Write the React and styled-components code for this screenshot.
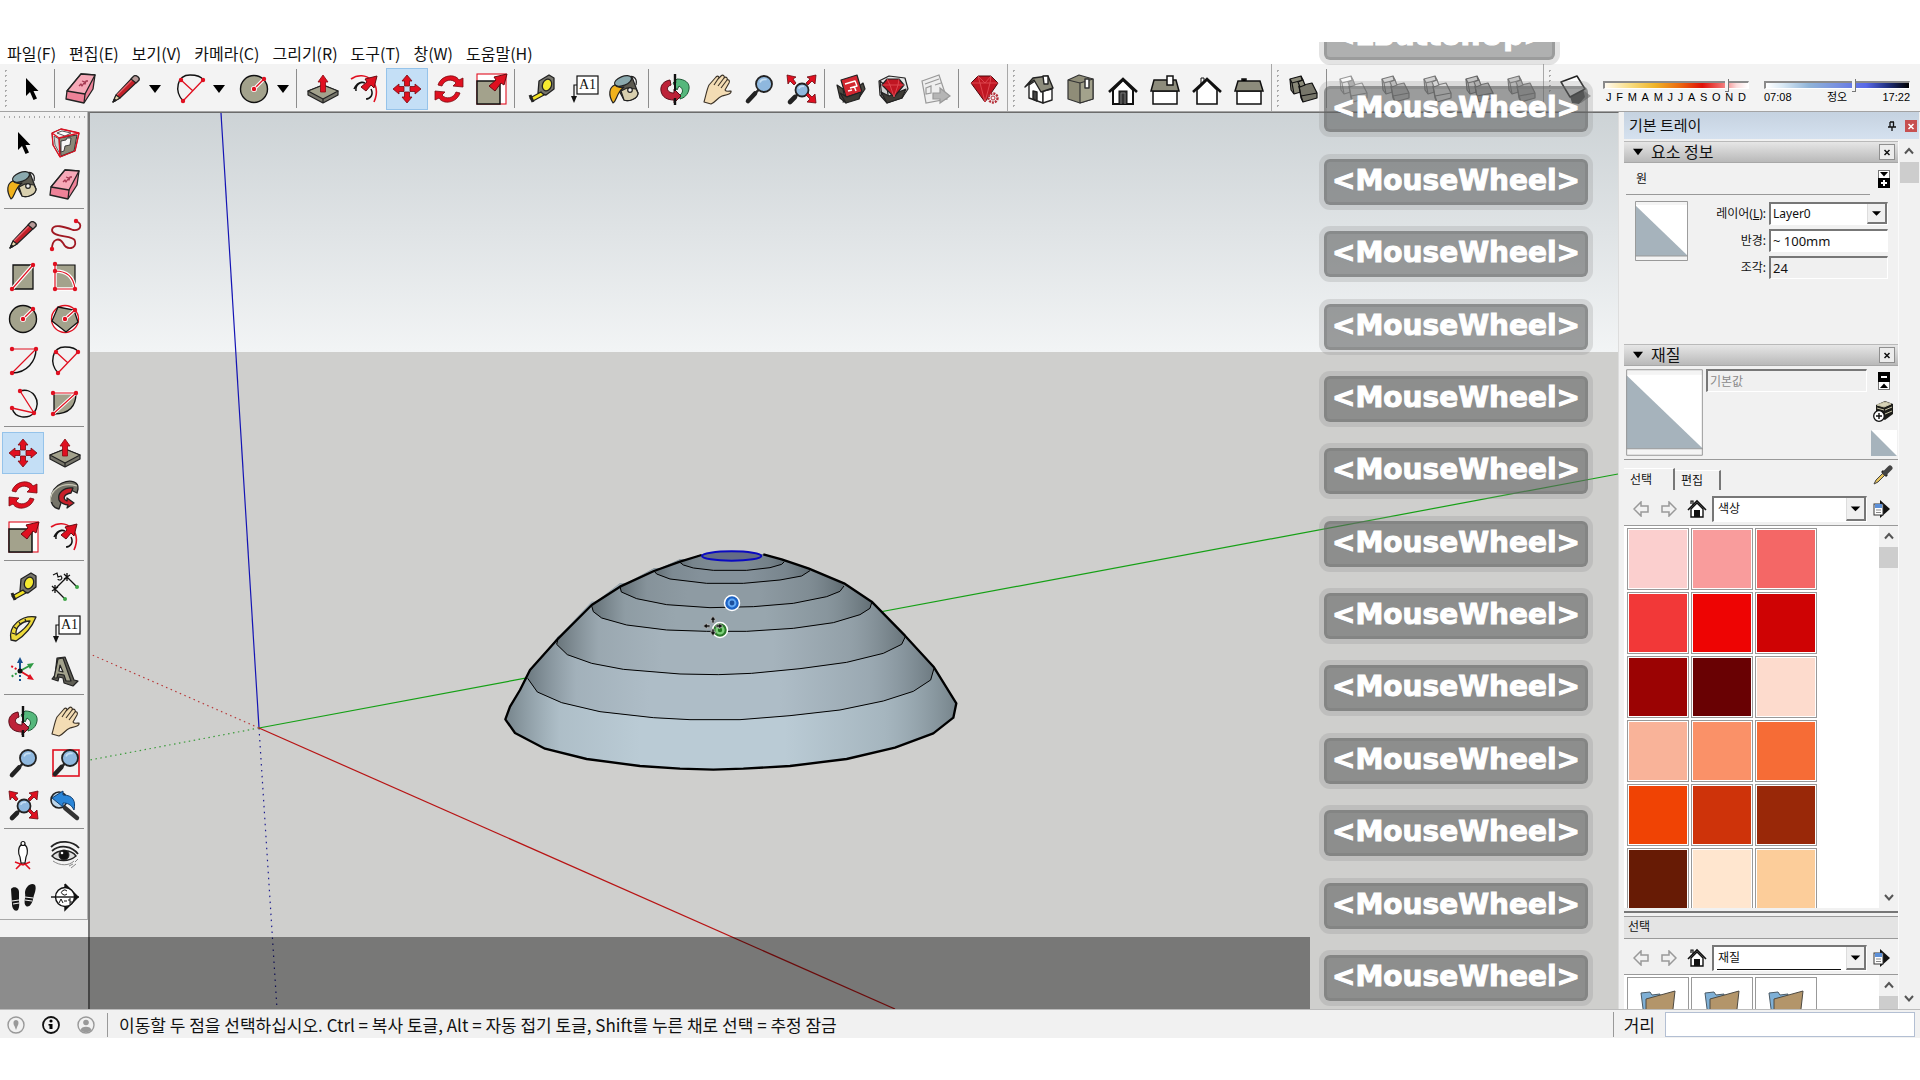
import React from "react";
import styled, { createGlobalStyle, css } from "styled-components";

const GlobalStyle = createGlobalStyle`
  * { box-sizing: border-box; }
  body { margin: 0; background: #fff; }
  button, input, select { font: inherit; color: inherit; margin: 0; padding: 0; border-radius: 0; }
`;

const ui = '"Noto Sans CJK KR", sans-serif';
const small = '"Noto Sans", "Noto Sans CJK KR", sans-serif';

/* ---------- shell ---------- */

const Page = styled.div`
  height: 100vh;
  min-height: 600px;
  padding: 42px 0;
  background: #fff;
  color: #111;
  font: 16px/20px ${ui};
  overflow: hidden;
`;
const Window = styled.div`
  position: relative;
  height: 100%;
  display: flex;
  flex-direction: column;
`;
const MenuBar = styled.nav`
  display: flex;
  gap: 13px;
  height: 22px;
  padding-left: 7px;
  flex: none;
`;
const MenuItem = styled.button`
  border: 0;
  background: none;
  line-height: 22px;
  white-space: nowrap;
`;
const ToolBar = styled.div`
  display: flex;
  flex: none;
  height: 48px;
  background: #f3f3f3;
  border-bottom: 1px solid #a3a3a3;
`;
const ToolGroup = styled.div`
  display: flex;
  align-items: center;
  padding: 3px 1px 0 0;
  border-left: ${(p) => (p.$first ? "0" : "1px solid #a8a8a8")};
`;
const Grip = styled.span`
  width: 10px;
  align-self: stretch;
  margin: 1px 0 3px;
  background: radial-gradient(circle at 50% 50%, #aaa 1px, transparent 1px) 50% 0 / 5px 5px repeat-y;
`;
const Divider = styled.span`
  width: 8px;
  align-self: stretch;
  padding: 2px 0 3px 2px;
  &::before { content: ""; display: block; width: 1px; height: 100%; background: #8d8d8d; }
`;
const ToolButton = styled.button`
  display: flex;
  align-items: center;
  justify-content: ${(p) => (p.$split ? "flex-start" : "center")};
  gap: 5px;
  width: ${(p) => (p.$split ? 64 : 42)}px;
  height: 42px;
  padding-left: ${(p) => (p.$split ? 5 : 0)}px;
  flex: none;
  border: 1px solid transparent;
  background: none;
  ${(p) => p.$on && css`background: #c4dff6; border-color: #95c3ea;`}
`;
const Glyph = styled.svg`
  display: block;
  flex: none;
  width: ${(p) => p.$w || 36}px;
  height: ${(p) => p.$h || p.$w || 36}px;
`;

const SunPanel = styled.div`
  display: flex;
  gap: 15px;
  padding: 17px 10px 0 6px;
  flex: 1;
`;
const SunSlider = styled.label`
  flex: 1;
  min-width: 0;
  display: flex;
  flex-direction: column;
  font: 11px/12px "Liberation Sans", "Noto Sans CJK KR", sans-serif;
`;
const Track = styled.input`
  appearance: none;
  width: 100%;
  height: 8px;
  border: 1px solid #fff;
  border-top: 2px solid #8a8a8a;
  border-left: 2px solid #8a8a8a;
  background: ${(p) => p.$fill};
  &::-webkit-slider-thumb {
    appearance: none;
    width: 4px;
    height: 13px;
    background: #f4f4f4;
    border-right: 1px solid #777;
    border-bottom: 1px solid #777;
  }
`;
const Ticks = styled.span`
  display: flex;
  justify-content: space-between;
  padding: 2px ${(p) => (p.$inset ? 3 : 0)}px 0;
  color: #000;
`;

const Main = styled.main`
  position: relative;
  display: flex;
  flex: 1;
  min-height: 0;
`;
const ToolBox = styled.aside`
  flex: none;
  width: 90px;
  background: #f2f2f2;
  border-right: 2px solid #777;
`;
const ToolBoxInner = styled.div`
  padding-bottom: 1px;
  border-right: 1px solid #b5b5b5;
  border-bottom: 1px solid #a8a8a8;
`;
const TopGrip = styled.div`
  height: 10px;
  margin: 0 2px;
  background: radial-gradient(circle at 50% 50%, #aaa 1px, transparent 1px) 0 50% / 5px 6px repeat-x;
`;
const ToolGrid = styled.div`
  display: grid;
  grid-template-columns: 42px 42px;
  padding: 0 2px;
  & + &::before {
    content: "";
    grid-column: 1 / -1;
    height: 1px;
    margin: 2px 2px 5px;
    background: #8d8d8d;
  }
`;
const Viewport = styled.section`
  flex: 1;
  min-width: 0;
  border-top: 1px solid #6c6c6c;
  border-right: 1px solid #ddd;
  background: #cfcfcd;
`;
const Scene = styled.svg`
  display: block;
  width: 100%;
  height: 100%;
`;
const CaptionBand = styled.div`
  position: absolute;
  left: 0;
  right: 610px;
  bottom: 0;
  height: 72px;
  background: rgba(0, 0, 0, 0.42);
`;

/* ---------- key stroke overlay ---------- */

const KeyStack = styled.div`
  position: absolute;
  top: 0;
  right: 327px;
  bottom: 30px;
  padding-bottom: 7px;
  overflow: hidden;
  display: flex;
  flex-direction: column;
  justify-content: space-between;
  align-items: flex-start;
  pointer-events: none;
`;
const KeyCap = styled.div`
  margin: 0 5px;
  height: 46px;
  padding: 0 5px;
  border: 3px solid rgba(110, 110, 110, 0.3);
  border-radius: 6px;
  background: ${(p) => (p.$faded ? "rgba(96, 98, 98, 0.5)" : "rgba(96, 98, 98, 0.6)")};
  box-shadow: 0 0 0 5px rgba(140, 140, 140, 0.24);
  color: #fff;
  font: bold 28px/38px "DejaVu Sans", sans-serif;
  -webkit-text-stroke: 1px #fff;
  white-space: nowrap;
  &:first-child { margin-top: -28px; }
`;

/* ---------- tray ---------- */

const Tray = styled.aside`
  flex: none;
  width: 301px;
  padding: 0 1px 0 5px;
  display: flex;
  flex-direction: column;
  background: #f1f1f1;
  font: 12px/18px ${small};
`;
const TrayTitle = styled.header`
  display: flex;
  align-items: center;
  height: 27px;
  padding: 0 2px 0 5px;
  margin-bottom: 2px;
  background: linear-gradient(#c5d2e0, #d5e1ef);
  font: 15px/24px ${ui};
  h2 { flex: 1; margin: 0; padding-bottom: 2px; font: inherit; }
`;
const PlainButton = styled.button`
  display: flex;
  align-items: center;
  justify-content: center;
  width: ${(p) => p.$w || 26}px;
  height: ${(p) => p.$h || 26}px;
  border: 0;
  background: none;
`;
const TrayClose = styled(PlainButton)`
  background: #c75050;
  margin-left: 6px;
`;
const TrayBody = styled.div`
  flex: 1;
  min-height: 0;
  display: flex;
`;
const Panels = styled.div`
  flex: 1;
  min-width: 0;
  display: flex;
  flex-direction: column;
  border-right: 1px solid #fafafa;
`;
const PanelHead = styled.header`
  display: flex;
  align-items: center;
  flex: none;
  height: 22px;
  padding: 0 3px 0 9px;
  gap: 8px;
  border-top: 1px solid #b9b9b9;
  border-bottom: 1px solid #a8a8a8;
  background: linear-gradient(#e6e6e6, #b9b9b9);
  font: 16px/18px ${ui};
  h3 { flex: 1; margin: 0; padding-bottom: 2px; font: inherit; }
`;
const PanelClose = styled(PlainButton)`
  border: 1px solid #8f8f8f;
  background: #ececec;
`;
const EntityBody = styled.div`
  flex: none;
  height: 181px;
  padding: 0 2px;
`;
const EntityName = styled.div`
  display: flex;
  align-items: center;
  height: 31px;
  padding: 0 6px 0 10px;
  justify-content: space-between;
`;
const Rule = styled.hr`
  flex: none;
  margin: 0 ${(p) => p.$right || 0}px 0 0;
  border: 0;
  height: 1px;
  background: #999;
`;
const EntityRow = styled.div`
  display: flex;
  justify-content: space-between;
  padding: 6px 8px 0 9px;
`;
const FieldGrid = styled.div`
  display: grid;
  grid-template-columns: auto 119px;
  column-gap: 3px;
  row-gap: 4px;
  padding-top: 1px;
  text-align: right;
  label { line-height: 23px; white-space: nowrap; }
`;
const sunken = css`
  border: 1px solid #fff;
  border-top: 2px solid #777;
  border-left: 2px solid #777;
`;
const TextBox = styled.input`
  ${sunken}
  width: ${(p) => (p.$w ? p.$w + "px" : "100%")};
  height: 23px;
  padding: 0 2px;
  font-size: 13px;
  background: ${(p) => (p.readOnly ? "#f0f0f0" : "#fff")};
  ${(p) => p.$muted && css`color: #8a8a8a; font-size: 12px;`}
`;
const SelectBox = styled.span`
  ${sunken}
  display: flex;
  flex: ${(p) => (p.$grow ? 1 : "none")};
  height: ${(p) => p.$h || 23}px;
  background: #fff;
  select {
    flex: 1;
    min-width: 0;
    appearance: none;
    border: 0;
    background: none;
    padding-left: ${(p) => (p.$grow ? 4 : 2)}px;
    ${(p) => p.$line && css`border-bottom: 1px solid #111; margin: 0 5px 0 3px; padding-left: 1px;`}
  }
  svg {
    height: 100%;
    width: 20px;
    background: #f0f0f0;
    border-right: 2px solid #777;
    border-bottom: 2px solid #777;
    border-left: 1px solid #ddd;
  }
`;
const MaterialHead = styled.div`
  display: flex;
  flex: none;
  height: 93px;
  padding: 3px 0 0 2px;
  gap: 3px;
`;
const SideIcons = styled.div`
  flex: 1;
  display: flex;
  flex-direction: column;
  align-items: center;
  gap: 4px;
  padding-top: 1px;
`;
const TabRow = styled.div`
  display: flex;
  align-items: flex-end;
  flex: none;
  height: 30px;
`;
const Tab = styled.button`
  width: ${(p) => (p.$on ? 51 : 46)}px;
  height: ${(p) => (p.$on ? 22 : 20)}px;
  padding: 0 6px;
  text-align: left;
  border: 0;
  border-top: 1px solid #fff;
  border-right: 2px solid #777;
  background: #f1f1f1;
  line-height: 16px;
`;
const TabSpacer = styled.span`
  flex: 1;
`;
const NavRow = styled.div`
  display: flex;
  align-items: center;
  flex: none;
  height: 35px;
  padding: 2px 2px 0 3px;
`;
const ListRow = styled.div`
  display: flex;
  flex: ${(p) => (p.$h ? "none" : "1")};
  height: ${(p) => (p.$h ? p.$h + "px" : "auto")};
  min-height: 0;
  overflow: hidden;
  background: #fff;
`;
const SwatchGrid = styled.div`
  flex: 1;
  display: grid;
  grid-template-columns: repeat(3, 62px);
  grid-auto-rows: 62px;
  gap: 2px;
  padding: 2px 3px 0;
`;
const Swatch = styled.button`
  border: 1px solid #999;
  padding: 1px;
  background: ${(p) => p.$color || "#fff"};
  background-clip: content-box;
  display: flex;
  align-items: center;
  justify-content: center;
`;
const Splitter = styled.div`
  flex: none;
  height: 8px;
  padding-top: 3px;
  &::before { content: ""; display: block; height: 2px; background: #777; }
`;
const PickBar = styled.div`
  flex: none;
  height: 23px;
  padding: 0 4px;
  line-height: 20px;
  border-top: 1px solid #999;
  border-bottom: 1px solid #999;
  background: #e4e4e4;
`;
const ScrollBar = styled.div`
  flex: none;
  width: ${(p) => p.$w}px;
  display: flex;
  flex-direction: column;
  align-items: center;
  background: #f1f1f1;
`;
const Thumb = styled.span`
  flex: none;
  width: 19px;
  height: 21px;
  background: #cdcdcd;
`;
const Filler = styled.span`
  flex: 1;
`;

/* ---------- status bar ---------- */

const StatusBar = styled.footer`
  display: flex;
  align-items: center;
  flex: none;
  height: 29px;
  padding: 1px 5px 0 7px;
  background: #f1f1f1;
  border-top: 1px solid #bbb;
  font: 17px/24px ${ui};
`;
const StatusIcons = styled.div`
  display: flex;
  gap: 17px;
  padding-right: 12px;
`;
const StatusText = styled.span`
  flex: 1;
  padding-left: 11px;
  border-left: 1px solid #999;
  white-space: nowrap;
`;
const Measure = styled.label`
  display: flex;
  align-items: center;
  gap: 10px;
  padding-left: 10px;
  border-left: 1px solid #999;
  input { width: 250px; height: 25px; border: 1px solid #b3bfd3; background: #fff; }
`;

/* ---------- icons ---------- */

const R = "#e01020";
const K = "#111";
const G = "#a3a28c";

const Dots = ({ at }) => at.map(([x, y]) => <circle key={x + "," + y} cx={x} cy={y} r="2.2" fill={R} />);

const fatArrow = "M0 -14 L5 -8 H2.5 V-3 H-2.5 V-8 H-5 Z";
const Cross = () => (
  <g transform="translate(18 18)" fill={R} stroke="#7a0a10" strokeWidth="0.8">
    {[0, 90, 180, 270].map((a) => <path key={a} d={fatArrow} transform={`rotate(${a})`} />)}
  </g>
);
const Lens = ({ x, y, r, hx, hy }) => (
  <g>
    <line x1={x} y1={y} x2={hx} y2={hy} stroke="#2a2a2a" strokeWidth="2.5" />
    <line x1={(x + hx) / 2 - 1} y1={(y + hy) / 2 + 1} x2={hx} y2={hy} stroke="#222" strokeWidth="4.6" strokeLinecap="round" />
    <circle cx={x} cy={y} r={r} fill="#8fb8de" stroke="#222" strokeWidth="1.8" />
    <path d={`M${x - r / 2} ${y - r / 5} Q${x - r / 3} ${y - r / 1.5} ${x + r / 3} ${y - r / 1.8}`} stroke="#c5def2" strokeWidth="1.6" fill="none" />
  </g>
);
const Solid = ({ a, b, mid, line = "#333" }) => (
  <g stroke={line} strokeWidth="1.2" strokeLinejoin="round">
    <path d="M5 8 L16 5 L19 16 L19 20 L9 23 L6 19 Z" fill={a} />
    <path d="M5 8 L7 12 L18 9 L16 5 M7 12 L9 23" fill="none" />
    <path d="M14 15 L27 12 L32 22 L32 27 L18 31 L16 27 Z" fill={b} />
    <path d="M16 25 L32 22 M16 25 L14 15 M16 25 L18 31" fill="none" />
    <path d="M13 11 L18 9 L20 14 L15 16 Z" fill={mid} />
  </g>
);

const art = {
  select: <path d="M13 7 V25 L17 21 L20.500 29 L24 27.500 L20.500 20 H25.500 Z" fill="#000" />,
  component: (
    <g strokeLinejoin="round">
      <path d="M5 8 L14 4 L32 8 L28 26 L13 32 L6 20 Z" fill="#efefef" stroke="#444" />
      <path d="M12 13 L30 10 L27 26 L14 31 Z" fill="#8a8978" stroke="#333" />
      <path d="M7 11 L12 14 L13 29 L8 20 Z" fill="#d8d8d8" stroke="#444" strokeWidth=".8" />
      <path d="M14 16 l5 -1 l1 -2 h4 l-1 7 l-5 1 l-1 5 l-3 1 z" fill="#f6f6f6" stroke="#333" strokeWidth=".9" />
      <path d="M10 8 L15 6 L24 8 L18 11 Z" fill="#fff" stroke="#444" strokeWidth=".9" />
      <path d="M5 8 L14 4 L32 8 L28 26 L13 32 L6 20 Z M5 8 L12 13 L32 8 M12 13 L13 32" fill="none" stroke={R} strokeWidth="1.3" />
    </g>
  ),
  bucket: (
    <g stroke="#222" strokeWidth="1.2" strokeLinejoin="round">
      <path d="M20 9 C23 2 31 6 29 14" fill="none" />
      <path d="M8 12 L25 6 L31 22 C31 28 21 31 17 29 Z" fill="#5c5a50" />
      <path d="M17 29 L14 20 L20 17 L29 18 L31 22 C31 28 21 31 17 29" fill="#d8cfae" />
      <ellipse cx="16" cy="10" rx="9" ry="4.500" transform="rotate(-22 16 10)" fill="#8aa9ae" />
      <path d="M8 14 C2 16 1 24 6 32 C10 30 9 22 17 16 C14 17 10 16 8 14 Z" fill="#f0b21c" />
      <circle cx="23" cy="19" r="2.300" fill="#eee" />
    </g>
  ),
  eraser: (
    <g stroke="#222" strokeWidth="1.3" strokeLinejoin="round">
      <path d="M18 3 L32 4 L30 18 L21 32 L3 28 L4 20 Z" fill="#ee8298" />
      <path d="M18 3 L32 4 L22 23 L4 20 Z" fill="#f6a9b8" />
      <path d="M22 23 L21 32" />
      <path d="M16 15 l2 -2 l1 2 l2 -3 l1 1 l1 -3 l2 0 M19 10 l3 1" stroke="#a33850" fill="none" />
    </g>
  ),
  pencil: (
    <g stroke="#222" strokeWidth="1.1" strokeLinejoin="round">
      <path d="M5 31 L8 24 L25 6 C27 3 32 6 31 9 L12 27 Z" fill="#c22028" />
      <path d="M9 24 L26 7" stroke="#e8606a" strokeWidth="1.200" />
      <path d="M25 6 C27 3 32 6 31 9 L28 12 L23 8 Z" fill="#b79a98" />
      <path d="M5 31 L8 24 L12 27 Z" fill="#ead9ae" />
      <path d="M5 31 L6.500 28 L8 29.500 Z" fill="#000" />
    </g>
  ),
  freehand: (
    <g>
      <path d="M5 32 C5 22 12 20 16 26 C20 34 30 32 28 24 C27 18 5 21 5 13 C6 6 18 10 26 13 C34 14 36 7 29 4" fill="none" stroke="#a01822" strokeWidth="1.8" />
      <Dots at={[[5, 32], [29, 4]]} />
    </g>
  ),
  line: (
    <g>
      <path d="M8 6 H28 V30 H8 Z" fill={G} stroke={K} strokeWidth="1.3" />
      <path d="M7 30 L28 6" stroke="#fff" strokeWidth="3.600" /><path d="M7 30 L28 6" stroke={R} strokeWidth="1.200" />
      <Dots at={[[7, 30], [28, 6]]} />
    </g>
  ),
  rotrect: (
    <g>
      <path d="M8 6 H28 V30 H8 Z" fill={G} stroke={K} strokeWidth="1.2" />
      <path d="M8 5 V30 H28 M8 12 Q26 12 28 30" stroke="#fff" strokeWidth="3.400" fill="none" />
      <path d="M8 5 V30 H28 M8 12 Q26 12 28 30" stroke={R} strokeWidth="1.200" fill="none" />
      <Dots at={[[8, 5], [8, 12], [8, 30], [28, 30]]} />
    </g>
  ),
  circle: (
    <g>
      <circle cx="18" cy="18" r="13.500" fill={G} stroke={K} strokeWidth="1.4" />
      <path d="M18 18 L27 9" stroke="#fff" strokeWidth="3.600" /><path d="M18 18 L27 9" stroke={R} strokeWidth="1.300" />
      <circle cx="18" cy="18" r="3" fill="#fff" />
      <Dots at={[[18, 18], [28, 8]]} />
    </g>
  ),
  polygon: (
    <g>
      <circle cx="18" cy="18" r="13.500" fill="#fff" stroke={R} strokeWidth="1.3" />
      <path d="M11 6 L27 9 L31 21 L19 31 L5 20 Z" fill={G} stroke={K} strokeWidth="1.3" />
      <path d="M18 18 L28 9" stroke="#fff" strokeWidth="3.600" /><path d="M18 18 L28 9" stroke={R} strokeWidth="1.300" />
      <circle cx="18" cy="18" r="3" fill="#fff" />
      <Dots at={[[18, 18], [28, 9]]} />
    </g>
  ),
  arc: (
    <g fill="none">
      <path d="M31 6 C31 18 22 30 7 30" stroke={K} strokeWidth="1.4" />
      <path d="M7 6 H31 L7 30" stroke={R} strokeWidth="1.200" />
      <Dots at={[[7, 6], [31, 6], [7, 30]]} />
    </g>
  ),
  arc2: (
    <g fill="none">
      <path d="M11 30 C2 20 5 4 18 4 C25 4 29 5 31 9" stroke={K} strokeWidth="1.4" />
      <path d="M11 30 L31 9 M9 9 L21 20" stroke={R} strokeWidth="1.300" />
      <Dots at={[[9, 9], [31, 9], [11, 30]]} />
    </g>
  ),
  arc3: (
    <g fill="none">
      <path d="M15 6 C28 2 37 16 29 28 C23 34 10 34 7 23" stroke={K} strokeWidth="1.4" />
      <path d="M15 6 L29 28 L7 23" stroke={R} strokeWidth="1.300" />
      <Dots at={[[15, 6], [7, 23], [29, 28]]} />
    </g>
  ),
  pie: (
    <g>
      <path d="M7 8 H29 Q29 29 7 29 Z" fill={G} stroke={K} strokeWidth="1.3" />
      <path d="M6 8 H29 L6 29" stroke="#fff" strokeWidth="3.200" fill="none" /><path d="M6 8 H29 L6 29" stroke={R} strokeWidth="1.200" fill="none" />
      <Dots at={[[6, 8], [29, 8], [6, 29]]} />
    </g>
  ),
  move: <Cross />,
  push: (
    <g stroke="#222" strokeWidth="1.2" strokeLinejoin="round">
      <path d="M3 20 L18 14 L33 20 V24 L18 32 L3 24 Z" fill="#76756a" />
      <path d="M3 20 L18 14 L33 20 L18 28 Z" fill={G} /><path d="M18 28 V32" />
      <path d="M18 4 L23 11 H20.500 V21 H15.500 V11 H13 Z" fill={R} stroke="#8a0a12" strokeWidth=".8" />
    </g>
  ),
  rotate: (
    <g fill={R} stroke="#7a0a10" strokeWidth="0.8" strokeLinejoin="round">
      <path d="M7 14 C10 4 24 2 28 9 L32 7 V16 L22 15 L25 12 C21 7 13 9 11 15 Z" />
      <path d="M29 22 C26 32 12 34 8 27 L4 29 V20 L14 21 L11 24 C15 29 23 27 25 21 Z" />
    </g>
  ),
  follow: (
    <g stroke="#222" strokeWidth="1.3" strokeLinejoin="round">
      <path d="M12 32 C0 30 2 12 15 6 C24 2 32 5 31 12 L30 16 L24 13 C16 11 9 19 14 26 Z" fill="#76756a" />
      <path d="M4 25 C2 14 14 4 30 9" fill="none" stroke="#c9c8b6" />
      <path d="M26 11 C17 10 10 16 12 23 C13 26 19 28 21 28 L20 31 L27 26 L20 21 V24 C15 22 17 17 24 16 Z" fill="#c8202a" />
    </g>
  ),
  scale: (
    <g>
      <rect x="4" y="3" width="29" height="30" fill="#fff" stroke={R} strokeWidth="1.1" />
      <rect x="4" y="10" width="23" height="23" fill={G} stroke={K} strokeWidth="1.5" />
      <path d="M34 3 L31 14 L28 12 L22 20 L16 15 L23 9 L21 6 Z" fill={R} stroke="#6a0a10" />
    </g>
  ),
  offset: (
    <g fill="none">
      <path d="M4 8 C18 -2 36 12 27 31" stroke={R} strokeWidth="1.6" />
      <path d="M7 18 C12 8 18 12 18 12 M24 18 C27 24 23 28 19 28 M9 20 C8 14 14 10 18 12" stroke={K} strokeWidth="1.5" />
      <path d="M30 5 L27 17 L24 14 L19 20 L14 16 L20 11 L18 8 Z" fill={R} stroke="#6a0a10" />
    </g>
  ),
  tape: (
    <g stroke="#222" strokeWidth="1.3" strokeLinejoin="round">
      <path d="M16 10 L26 4 L31 7 V18 L23 24 L15 22 Z" fill="#77766c" />
      <ellipse cx="24" cy="14" rx="4.500" ry="6" transform="rotate(20 24 14)" fill="#f5ea30" />
      <path d="M18 21 L21 24 L10 30 L7 27 Z" fill="#f2e224" />
      <path d="M7 24 L10 31" strokeWidth="3" />
    </g>
  ),
  dim: (
    <g stroke={K} strokeWidth="1.3" fill="none">
      <path d="M8 20 L20 8 M8 20 L17 29 M20 8 L29 17 M5 17 L11 23 M17 5 L23 11 M8 16 V24 M20 4 V12 M5 22 L11 18 M17 10 L23 6" />
      <path d="M6 6 l4 -2 l1 4 l3 -1 c3 4 -3 5 -3 3" strokeWidth="1.2" />
      <circle cx="18" cy="30" r="2" fill="#3fa648" stroke="none" /><circle cx="30" cy="18" r="2" fill="#3fa648" stroke="none" />
    </g>
  ),
  protractor: (
    <g stroke="#222" strokeWidth="1.3" strokeLinejoin="round">
      <path d="M31 6 C17 4 3 14 6 29 L11 30 C19 25 27 16 31 6 Z" fill="#ecd93a" />
      <path d="M25 10 C17 10 10 16 11 24 C17 20 22 16 25 10 Z" fill="#f2f2f2" />
      <path d="M7 22 l3 1 M9 16 l3 2 M14 11 l2 3 M20 8 l1 3" />
    </g>
  ),
  text: (
    <g>
      <rect x="12" y="5" width="21" height="18" fill="#fff" stroke={K} strokeWidth="1.2" />
      <text x="22.500" y="18" textAnchor="middle" fontFamily="Liberation Serif" fontSize="14" fill={K}>A1</text>
      <path d="M12 14 H9 V27" fill="none" stroke={K} strokeWidth="1.2" /><path d="M6 25 H12 L9 32 Z" fill={K} />
    </g>
  ),
  axes: (
    <g fill="none" strokeWidth="2">
      <path d="M15 18 V9" stroke="#17508f" /><path d="M15 4 L18 10 H12 Z" fill="#17508f" />
      <path d="M15 18 L24 13" stroke="#2f9a44" /><path d="M29 10 L25 16 L22 11 Z" fill="#2f9a44" />
      <path d="M15 18 L25 24" stroke={R} /><path d="M29 27 L22 26 L25 21 Z" fill={R} />
      <path d="M15 18 V30" stroke="#17508f" strokeDasharray="2 2" /><path d="M15 18 L6 13" stroke={R} strokeDasharray="2 2" /><path d="M15 18 L6 24" stroke="#2f9a44" strokeDasharray="2 2" />
      <circle cx="15" cy="18" r="2.500" fill={K} />
    </g>
  ),
  text3d: (
    <g stroke="#222" strokeWidth="1.2" strokeLinejoin="round">
      <path d="M10 5 L18 4 L27 27 L31 28 L26 33 L17 30 L16 25 L12 24 L11 28 L5 26 L8 22 Z" fill="#5f5e54" />
      <path d="M11 6 L16 5 L24 28 L19 28 L17 22 L11 21 L10 25 L7 25 Z" fill={G} />
      <path d="M13 12 L16 19 L12 18 Z" fill="#f2f2f2" />
    </g>
  ),
  orbit: (
    <g strokeLinejoin="round" strokeWidth="1">
      <path d="M20 8 C28 8 33 12 32 18 C31 24 27 27 23 28 V24 C26 22 27 18 22 15 L20 19 L16 12 Z" fill="#55b87c" stroke="#1d5a35" />
      <path d="M13 9 C7 10 3 14 4 20 C5 26 10 29 17 29 L17 32 L24 25 L17 18 V22 C10 22 8 16 14 14 Z" fill="#bd2238" stroke="#5a0d18" />
      <path d="M18 3 V12 M18 27 V34" stroke="#111" strokeWidth="2.400" /><path d="M18 12 V20" stroke="#111" strokeWidth="2" />
    </g>
  ),
  hand: (
    <path d="M5 31 C7 24 8 18 10 14 L17 6 C19 4 21 6 19 8 L22 5 C24 3 26 5 25 7 C27 5 29 7 28 9 C30 8 31 10 30 12 L26 19 C27 21 30 20 32 20 C33 23 27 24 23 25 C18 27 17 31 12 33 Z M19 8 L15 14 M25 7 L19 15 M28 9 L22 17" fill="#f3dcb4" stroke="#3a3126" strokeWidth="1.1" strokeLinejoin="round" />
  ),
  zoom: <Lens x={23} y={13} r={8} hx={7} hy={30} />,
  zoomwin: (<g><rect x="6" y="5" width="26" height="26" fill="none" stroke={R} strokeWidth="1.6" /><Lens x={23} y={13} r={8} hx={8} hy={29} /></g>),
  zoomext: (
    <g>
      <Lens x={19} y={19} r={6.5} hx={7} hy={31} />
      <g fill={R} stroke="#6a0a10" strokeWidth=".8">
        <path d="M4 4 L13 6 L10 8 L13 12 L11 14 L7 10 L5 13 Z" />
        <path d="M33 4 L24 6 L27 8 L23 12 L25 14 L29 10 L32 13 Z" />
        <path d="M33 32 L24 31 L27 28 L23 24 L25 22 L29 26 L32 23 Z" />
      </g>
    </g>
  ),
  prev: (
    <g>
      <circle cx="12" cy="13" r="8" fill="#bdd6ea" stroke="#222" strokeWidth="1.6" />
      <path d="M5 11 L16 4 V8 C26 8 29 14 27 23 C24 17 20 16 16 16 V20 Z" fill="#2b86d8" stroke="#123f70" />
      <path d="M18 21 L30 31" stroke="#333" strokeWidth="4.400" strokeLinecap="round" />
    </g>
  ),
  person: (
    <g stroke={K} strokeWidth="1.2" fill="#fff">
      <path d="M11 32 L18 25 L25 32 M10 25 L18 28 L25 25" stroke={R} fill="none" strokeWidth="1.6" />
      <path d="M16 8 C13 10 13 17 15 20 L16 26 H20 L21 20 C23 17 23 10 20 8 Z" /><circle cx="18" cy="6.500" r="2" />
    </g>
  ),
  eye: (
    <g fill="none" stroke="#222">
      <path d="M4 10 C12 2 26 4 32 11 M5 14 C13 7 25 9 31 17" strokeWidth="1.8" />
      <path d="M5 19 C11 12 24 12 29 19 C22 25 11 25 5 19 Z" fill="#ddd" strokeWidth="1.4" />
      <circle cx="17" cy="18" r="5" fill="#111" /><circle cx="15" cy="16" r="1.300" fill="#fff" stroke="none" />
      <path d="M6 24 C13 29 22 29 27 24 M22 29 l4 -2 M24 31 l5 -4 M28 25 l3 -3" stroke="#888" />
    </g>
  ),
  walk: (
    <g fill="#151515">
      <path d="M6 10 C8 7 14 8 14 13 L14 21 C14 24 15 27 13 31 C10 33 7 30 7 25 Z" />
      <path d="M20 14 C20 8 26 3 30 6 C32 10 29 15 28 20 C27 25 24 29 21 27 C18 24 21 19 20 14 Z" />
      <path d="M7 22 l7 -1 M8 25 l6 -1 M20 18 l8 1 M20 21 l7 1" stroke="#f2f2f2" strokeWidth="1.2" />
    </g>
  ),
  section: (
    <g fill="none" stroke={K} strokeWidth="1.4">
      <path d="M18 5 L31 18 L18 31 L18 5" fill={K} />
      <circle cx="18" cy="18" r="9.500" fill="#fff" /><path d="M4 18 H32" />
      <path d="M20 12 a3 2.500 0 1 0 0 3 M12 24 l2 -4 l2 4 M17 22 h3 M24 20 h-2 v2 h2 v2 h-2" strokeWidth="1" />
    </g>
  ),
  warehouse: (
    <g strokeLinejoin="round" stroke="#222" strokeWidth="1.2">
      <path d="M4 14 L10 18 L13 32 L7 27 Z M10 31 L26 27 L32 18 L30 12 L25 16 Z" fill="#4c4a42" />
      <path d="M8 9 L24 4 L29 21 L13 26 Z" fill="#d32630" />
      <path d="M7 22 L14 26 L28 21 L26 28 L13 32 Z" fill="#3d3b35" />
      <path d="M12 13 L22 10 L24 15 L17 17 M15 20 L19 19 M21 15 L23 20" stroke="#fff" fill="none" strokeWidth="1.4" />
    </g>
  ),
  extension: (
    <g strokeLinejoin="round" stroke="#222" strokeWidth="1.2">
      <path d="M4 10 L14 5 L30 7 L33 18 L27 27 L12 32 L5 24 Z" fill="#e4e4e4" />
      <path d="M5 10 L12 16 L14 31 L7 26 Z" fill="#d0d0d0" />
      <path d="M6 21 L14 25 L31 18 L27 27 L12 32 Z" fill="#3d3b35" />
      <path d="M7 14 L12 8 L24 8 L29 14 L19 26 Z" fill="#c01622" />
      <path d="M7 14 H29 M12 8 L15 14 L19 26 L23 14 L24 8" stroke="#e04a54" strokeWidth=".9" fill="none" />
    </g>
  ),
  layout: (
    <g stroke="#999" strokeWidth="1.2" fill="none">
      <path d="M5 10 L22 4 L30 28 L9 32 Z" fill="#eee" /><path d="M8 13 L22 8 M9 17 L14 15 V22 L9 23 Z M18 14 L24 12" />
      <path d="M16 22 H23 V17 L33 25 L23 32 V28 H16 Z" fill="#b5b5b5" />
    </g>
  ),
  ruby: (
    <g strokeLinejoin="round">
      <path d="M4 12 L11 5 H24 L31 12 L18 31 Z" fill="#c01622" stroke="#4a080d" />
      <path d="M4 12 H31 M11 5 L13 12 L18 31 L23 12 L24 5 M11 5 L18 12 L24 5" stroke="#e04a54" strokeWidth=".9" fill="none" />
      <circle cx="26" cy="27" r="4.500" fill="#f3f3f3" stroke="#b5303a" strokeWidth="2.400" strokeDasharray="2 1" /><circle cx="26" cy="27" r="2" fill="none" stroke="#b5303a" />
    </g>
  ),
  iso: (
    <g stroke="#222" strokeWidth="1.4" strokeLinejoin="round">
      <path d="M8 14 L14 10 L22 20 V32 L8 27 Z" fill="#fff" /><path d="M22 20 L31 18 V29 L22 32 Z" fill="#fff" />
      <path d="M4 16 L12 7 L27 5 L32 17 L20 21 L13 9 Z" fill="#8d8c7c" />
      <path d="M12 20 L16 21 V30 L12 28 Z" fill="#444" /><path d="M22 5 h5 v8 h-4 z" fill="#fff" />
    </g>
  ),
  top: (
    <g stroke="#333" strokeWidth="1.2" strokeLinejoin="round">
      <path d="M5 9 L16 4 L30 8 V28 L17 32 L5 28 Z" fill="#8f8d78" /><path d="M17 12 L30 8 V28 L17 32 Z" fill={G} /><path d="M5 9 L17 12" />
      <rect x="22" y="8" width="4" height="9" fill="#fff" strokeWidth="1.5" />
    </g>
  ),
  front: (
    <g stroke={K} strokeLinejoin="miter">
      <path d="M8 19 V33 H28 V19 L18 9 Z" fill="#fff" strokeWidth="2" /><path d="M4 21 L18 8 L32 21" fill="none" strokeWidth="2.600" />
      <rect x="14" y="20" width="8" height="13" fill="#333" /><path d="M16 33 V22 H20 V33" stroke="#777" fill="none" />
    </g>
  ),
  right: (
    <g stroke={K} strokeWidth="1.5">
      <rect x="6" y="20" width="24" height="13" fill="#fff" /><path d="M7 9 H29 L32 20 H4 Z" fill="#8d8c7c" /><rect x="20" y="5" width="6" height="9" fill="#fff" />
    </g>
  ),
  back: (
    <g stroke={K}>
      <path d="M12 14 V7 H15 V12" fill="#fff" /><path d="M8 19 V33 H28 V19 L18 9 Z" fill="#fff" strokeWidth="1.6" /><path d="M4 21 L18 8 L32 21" fill="none" strokeWidth="2.600" />
    </g>
  ),
  left: (
    <g stroke={K} strokeWidth="1.5">
      <rect x="6" y="20" width="24" height="13" fill="#fff" /><path d="M7 10 H29 L32 20 H4 Z" fill="#8d8c7c" /><path d="M11 10 V8 H15 V10" />
    </g>
  ),
  outer: <Solid a="#8a8978" b="#77766a" mid="#8a8978" line="#111" />,
  intersect: <Solid a="#fafafa" b="#fafafa" mid="#bbb" line="#999" />,
  union: <Solid a="#d4d4d4" b="#c0c0c0" mid="#ccc" line="#777" />,
  subtract: <Solid a="#d0d0d0" b="#f6f6f6" mid="#eee" line="#777" />,
  trim: <Solid a="#c4c4c4" b="#b8b8b8" mid="#bbb" line="#666" />,
  split: <Solid a="#c4c4c4" b="#b4b4b4" mid="#b4b4b4" line="#777" />,
  shadow: (
    <g strokeLinejoin="round">
      <path d="M12 24 L26 19 L34 25 L24 32 H16 Z" fill="#999" /><path d="M13 25 L26 18 L28 26 L22 33 L15 32 Z" fill="#444" />
      <path d="M4 11 L20 5 L28 18 L13 26 Z" fill="#fff" stroke="#222" strokeWidth="1.5" />
    </g>
  ),
};

const Icon = ({ name }) => <Glyph viewBox="0 0 36 36" aria-hidden="true">{art[name]}</Glyph>;
const Down = ({ w = 12 }) => (
  <Glyph viewBox="0 0 12 8" $w={w} $h={8} aria-hidden="true"><path d="M0 0 H12 L6 8 Z" fill="#000" /></Glyph>
);
const Chevron = ({ down }) => (
  <Glyph viewBox="0 0 16 21" $w={16} $h={21} aria-hidden="true">
    <path d={down ? "M4 8 L8 12.500 L12 8" : "M4 12.500 L8 8 L12 12.500"} fill="none" stroke="#555" strokeWidth="2" />
  </Glyph>
);
const CloseMark = ({ color = "#111" }) => (
  <Glyph viewBox="0 0 8 8" $w={8} aria-hidden="true"><path d="M1.500 2 L6.500 7 M6.500 2 L1.500 7" stroke={color} strokeWidth="1.5" /></Glyph>
);
const Material = ({ w, h, frame }) => (
  <Glyph viewBox="0 0 60 60" $w={w} $h={h} preserveAspectRatio="none" role="img" aria-label="재질 미리보기">
    <rect width="60" height="60" fill="#f4f4f4" />
    <rect y={frame ? 4 : 0} width="60" height={frame ? 51 : 60} fill="#fff" />
    <path d={frame ? "M0 4 L60 55 H0 Z" : "M0 0 L60 60 H0 Z"} fill="#a6b3bc" />
    {frame && <path d="M.5 .5 H59.500 V59.500 H.5 Z M0 55 H60" fill="none" stroke="#999" vectorEffect="non-scaling-stroke" />}
  </Glyph>
);

/* ---------- data ---------- */

const menus = ["파일(F)", "편집(E)", "보기(V)", "카메라(C)", "그리기(R)", "도구(T)", "창(W)", "도움말(H)"];

const bars = [
  ["select", "|", "eraser", "pencil+", "arc2+", "circle+", "|", "push", "offset", "move", "rotate", "scale", "|", "tape", "text", "bucket", "|", "orbit", "hand", "zoom", "zoomext", "|", "warehouse", "extension", "layout", "|", "ruby"],
  ["iso", "top", "front", "right", "back", "left"],
  ["outer", "|", "intersect", "union", "subtract", "trim", "split"],
];

const boxes = [
  ["select", "component", "bucket", "eraser"],
  ["pencil", "freehand", "line", "rotrect", "circle", "polygon", "arc", "arc2", "arc3", "pie"],
  ["move", "push", "rotate", "follow", "scale", "offset"],
  ["tape", "dim", "protractor", "text", "axes", "text3d"],
  ["orbit", "hand", "zoom", "zoomwin", "zoomext", "prev"],
  ["person", "eye", "walk", "section"],
];

const colors = [
  "#fbcfce", "#f99c9c", "#f46766", "#f23838", "#ee0403", "#cf0304",
  "#9b0303", "#690103", "#fddbcd", "#f9b399", "#fa9168", "#f66c36",
  "#f04304", "#ce330a", "#992808", "#671b05", "#ffe6cf", "#fccd9a",
];

const keys = ["<LButtonUp>", ...Array(13).fill("<MouseWheel>")];

/* Dome rings from the rim upward, each one a band of the surface. */
const rings = [
  { fill: "#bacbd5", edge: "#76848b", d: "M143 445 L120 480 L90 530 L76 568 L105 609 L195 656 L320 687 L480 708 L600 716 L700 719 L790 716 L930 708 L1100 687 L1245 653 L1360 610 L1420 563 L1429 520 L1362 412 L1275 317 H235 Z" },
  { fill: "#aebdc7", edge: "#6d7a81", d: "M235 322 L150 420 L143 445 L172 486 L245 518 L360 545 L520 563 L630 569 L780 569 L930 557 L1080 540 L1210 513 L1300 484 L1352 450 L1362 415 L1277 318 L1175 215 H335 Z" },
  { fill: "#a5b3bc", edge: "#68747a", d: "M335 225 L235 322 L230 343 L262 374 L335 400 L430 418 L600 432 L715 434 L815 430 L960 416 L1100 397 L1210 370 L1265 343 L1277 318 L1175 215 L1092 160 H420 Z" },
  { fill: "#98a6ae", edge: "#636f75", d: "M420 170 L335 225 L340 245 L365 264 L440 285 L560 300 L680 304 L800 304 L940 295 L1060 278 L1140 254 L1170 235 L1175 218 L1092 160 L985 115 H522 Z" },
  { fill: "#8e9ba3", edge: "#606c72", d: "M522 123 L420 170 L424 186 L470 206 L560 224 L690 233 L820 230 L940 220 L1040 200 L1080 184 L1092 165 L985 115 L905 88 H600 Z" },
  { fill: "#84919a", edge: "#5f6b71", d: "M600 95 L522 123 L530 132 L570 147 L680 160 L790 160 L900 150 L965 138 L990 120 L905 88 L850 73 H665 Z" },
  { fill: "#7d8a92", edge: "#616d74", d: "M665 75 L600 97 L610 105 L640 114 L700 121 L800 121 L870 113 L905 103 L913 92 L850 73 Z" },
];
const silhouette = "M665 75 L600 95 L522 123 L420 170 L335 225 L235 325 L150 420 L120 480 L90 530 L76 568 L105 609 L195 656 L320 687 L480 708 L600 716 L700 719 L790 716 L930 708 L1100 687 L1245 653 L1360 610 L1420 563 L1429 520 L1362 412 L1275 317 L1175 215 L1092 160 L985 115 L905 88 L850 73";

const tool = (name, i, on) => {
  if (name === "|") return <Divider key={i} />;
  const split = name.endsWith("+");
  const id = split ? name.slice(0, -1) : name;
  return (
    <ToolButton key={i} type="button" aria-label={id} $split={split} $on={on === id}>
      <Icon name={id} />
      {split && <Down />}
    </ToolButton>
  );
};

const Dome = () => (
  <g transform="translate(480 530) scale(0.33333)" strokeLinejoin="round">
    <defs>
      {rings.map((r, i) => (
        <linearGradient key={i} id={`ring${i}`}>
          <stop offset="0" stopColor={r.edge} />
          <stop offset="0.12" stopColor={r.fill} stopOpacity="0.82" />
          <stop offset="0.3" stopColor={r.fill} />
          <stop offset="0.62" stopColor={r.fill} />
          <stop offset="0.84" stopColor={r.fill} stopOpacity="0.7" />
          <stop offset="1" stopColor={r.edge} />
        </linearGradient>
      ))}
    </defs>
    <path d={silhouette} fill="#6f7b82" />
    {rings.map((r, i) => (
      <g key={i}>
        <path d={r.d} fill={r.edge} />
        <path d={r.d} fill={`url(#ring${i})`} />
      </g>
    ))}
    <g fill="none" stroke="#000" strokeWidth="3">
      <path d="M600 97 L610 105 L640 114 L700 121 L800 121 L870 113 L905 103 L913 95" />
      <path d="M522 123 L530 132 L570 147 L680 160 L790 160 L900 150 L965 138 L990 122" />
      <path d="M420 170 L424 186 L470 206 L560 224 L690 233 L820 230 L940 220 L1040 200 L1080 184 L1092 168" />
      <path d="M335 228 L340 245 L365 264 L440 285 L560 300 L680 304 L800 304 L940 295 L1060 278 L1140 254 L1170 235 L1175 218" />
      <path d="M235 322 L230 343 L262 374 L335 400 L430 418 L600 432 L715 434 L815 430 L960 416 L1100 397 L1210 370 L1265 343 L1277 318" />
      <path d="M143 445 L172 486 L245 518 L360 545 L520 563 L630 569 L780 569 L930 557 L1080 540 L1210 513 L1300 484 L1352 450 L1362 415" />
    </g>
    <path d={silhouette} fill="none" stroke="#000" strokeWidth="7" />
    <ellipse cx="755" cy="78" rx="89" ry="14" fill="#646c86" stroke="#0a0ac0" strokeWidth="6" />
  </g>
);

const Model = () => (
  <Scene viewBox="90 113 1528 896" preserveAspectRatio="xMinYMin slice" role="img" aria-label="모델 보기">
    <defs>
      <linearGradient id="sky" x1="0" y1="0" x2="0" y2="1">
        <stop offset="0" stopColor="#cdd3d6" />
        <stop offset="1" stopColor="#f2f4f5" />
      </linearGradient>
    </defs>
    <rect x="90" y="113" width="1528" height="239" fill="url(#sky)" />
    <rect x="90" y="352" width="1528" height="657" fill="#cfcfcd" />
    <g strokeWidth="1.2" fill="none">
      <path d="M221 113 L259 728" stroke="#1414b4" />
      <path d="M259 728 L277 1009" stroke="#1c1c90" strokeDasharray="1.500 4.500" />
      <path d="M259 728 L1618 474" stroke="#15a015" />
      <path d="M259 728 L90 760" stroke="#3a9a3a" strokeDasharray="1.500 3.500" />
      <path d="M259 728 L895 1009" stroke="#b81414" />
      <path d="M259 728 L90 654" stroke="#b83c3c" strokeDasharray="1.500 3.500" />
    </g>
    <Dome />
    <circle cx="732" cy="603" r="7.500" fill="#1c62c4" stroke="#fff" strokeWidth="1.5" />
    <circle cx="732" cy="603" r="3.400" fill="#1c4f9c" stroke="#62a8f4" strokeWidth="2" />
    <circle cx="720" cy="630" r="7.500" fill="#2c7a2c" stroke="#fff" strokeWidth="1.5" />
    <circle cx="720" cy="630" r="3.400" fill="#1e7a1e" stroke="#7ed07a" strokeWidth="2.400" />
    <g transform="translate(713 626) scale(0.75)" fill="#111" stroke="#bbb" strokeWidth="1">
      {[0, 90, 180, 270].map((a) => <path key={a} d="M0 -13 L4 -8 H1.500 V-4 H-1.500 V-8 H-4 Z" transform={`rotate(${a})`} />)}
    </g>
  </Scene>
);

const ArrowIcon = ({ flip }) => (
  <Glyph viewBox="0 0 16 16" $w={16} aria-hidden="true">
    <path d="M1 8 L8 1 V5 H15 V11 H8 V15 Z" transform={flip ? "matrix(-1 0 0 1 16 0)" : undefined} fill="none" stroke="#999" strokeWidth="1.5" />
  </Glyph>
);
const HomeIcon = () => (
  <Glyph viewBox="0 0 20 20" $w={20} aria-hidden="true">
    <path d="M4 5 V2 H6 V6" fill="none" stroke="#111" strokeWidth="1.2" />
    <path d="M4 10 V18 H16 V10 L10 4 Z" fill="#fff" stroke="#111" strokeWidth="1.4" />
    <path d="M1 11 L10 2 L19 11" fill="none" stroke="#111" strokeWidth="1.6" /><rect x="7" y="11" width="6" height="7" fill="#111" />
  </Glyph>
);
const DetailIcon = () => (
  <Glyph viewBox="0 0 18 18" $w={18} aria-hidden="true">
    <path d="M7 0 L17 9 L7 18 Z" fill="#111" /><rect x="1" y="4" width="9" height="11" fill="#fff" stroke="#333" />
    <rect x="2" y="4" width="7" height="4" fill="#5b8fd8" /><path d="M3 10 H8 M3 12.500 H8" stroke="#888" />
  </Glyph>
);

const Navigator = ({ id, value, line }) => (
  <NavRow>
    <PlainButton type="button" aria-label="뒤로" $w={28}><ArrowIcon /></PlainButton>
    <PlainButton type="button" aria-label="앞으로" $w={27}><ArrowIcon flip /></PlainButton>
    <PlainButton type="button" aria-label="홈" $w={30}><HomeIcon /></PlainButton>
    <SelectBox $grow $h={26} $line={line}>
      <select id={id} aria-label={`${value} 모음`} defaultValue={value}><option>{value}</option></select>
      <svg viewBox="0 0 18 22" aria-hidden="true"><path d="M4 9 H14 L9 14 Z" fill="#000" /></svg>
    </SelectBox>
    <PlainButton type="button" aria-label="세부 정보" $w={29}><DetailIcon /></PlainButton>
  </NavRow>
);

const StackIcon = ({ flip }) => (
  <Glyph viewBox="0 0 12 18" $w={12} $h={18} aria-hidden="true">
    <g transform={flip ? "matrix(1 0 0 -1 0 18)" : undefined}>
      <rect x=".5" y=".5" width="11" height="17" fill="#fff" stroke="#777" />
      <path d="M2 2 H10 L6 6.500 Z" /><rect y="8" width="12" height="10" />
      <path d={flip ? "M3 13 H9" : "M3 13 H9 M6 10 V16"} stroke="#fff" strokeWidth="2" />
    </g>
  </Glyph>
);

export default function App() {
  return (
    <Page>
      <GlobalStyle />
      <Window>
        <MenuBar>
          {menus.map((m) => <MenuItem key={m} type="button">{m}</MenuItem>)}
        </MenuBar>

        <ToolBar>
          {bars.map((bar, b) => (
            <ToolGroup key={b} $first={b === 0}>
              <Grip />
              {bar.map((n, i) => tool(n, i, "move"))}
            </ToolGroup>
          ))}
          <ToolGroup><Grip />{tool("shadow", 0)}</ToolGroup>
          <SunPanel>
            <SunSlider>
              <Track type="range" aria-label="날짜" min="0" max="100" defaultValue="86" $fill="linear-gradient(90deg,#fffaf0,#f8dc80 18%,#f0b428 35%,#ec6a10 52%,#e01008 68%,#f07070 82%,#fbdcdc 92%,#fff)" />
              <Ticks $inset>{"JFMAMJJASOND".split("").map((m, i) => <span key={i}>{m}</span>)}</Ticks>
            </SunSlider>
            <SunSlider>
              <Track type="range" aria-label="시간" min="0" max="100" defaultValue="62" $fill="linear-gradient(90deg,#fff,#d8e8f4 12%,#90b4d8 30%,#7890e0 50%,#5868e8 70%,#203080 85%,#000)" />
              <Ticks><span>07:08</span><span>정오</span><span>17:22</span></Ticks>
            </SunSlider>
          </SunPanel>
        </ToolBar>

        <Main>
          <ToolBox>
            <ToolBoxInner>
              <TopGrip />
              {boxes.map((box, b) => (
                <ToolGrid key={b}>{box.map((n, i) => tool(n, i, "move"))}</ToolGrid>
              ))}
            </ToolBoxInner>
          </ToolBox>

          <Viewport><Model /></Viewport>

          <Tray>
            <TrayTitle>
              <h2>기본 트레이</h2>
              <PlainButton type="button" aria-label="고정" $w={14} $h={14}>
                <Glyph viewBox="0 0 8 10" $w={8} $h={10} aria-hidden="true"><path d="M2 1 V6 M2 1 H6 M5.500 1 V6 M0 6 H8 M4 6 V10" fill="none" stroke="#111" strokeWidth="1.3" /></Glyph>
              </PlainButton>
              <TrayClose type="button" aria-label="닫기" $w={12} $h={12}><CloseMark color="#fff" /></TrayClose>
            </TrayTitle>
            <TrayBody>
              <Panels>
                <PanelHead>
                  <Down w={10} /><h3>요소 정보</h3>
                  <PanelClose type="button" aria-label="닫기" $w={16} $h={16}><CloseMark /></PanelClose>
                </PanelHead>
                <EntityBody>
                  <EntityName><span>원</span><StackIcon /></EntityName>
                  <Rule $right={26} />
                  <EntityRow>
                    <Material w={53} h={60} frame />
                    <FieldGrid>
                      <label htmlFor="layer">레이어(<u>L</u>):</label>
                      <SelectBox>
                        <select id="layer" defaultValue="Layer0"><option>Layer0</option></select>
                        <svg viewBox="0 0 18 20" aria-hidden="true"><path d="M4 8 H14 L9 13 Z" fill="#000" /></svg>
                      </SelectBox>
                      <label htmlFor="radius">반경:</label>
                      <TextBox id="radius" defaultValue="~ 100mm" />
                      <label htmlFor="segments">조각:</label>
                      <TextBox id="segments" defaultValue="24" readOnly />
                    </FieldGrid>
                  </EntityRow>
                </EntityBody>
                <PanelHead>
                  <Down w={10} /><h3>재질</h3>
                  <PanelClose type="button" aria-label="닫기" $w={16} $h={16}><CloseMark /></PanelClose>
                </PanelHead>
                <MaterialHead>
                  <Material w={77} h={87} frame />
                  <TextBox aria-label="재질 이름" defaultValue="기본값" readOnly $muted $w={161} />
                  <SideIcons>
                    <PlainButton type="button" aria-label="보조 창" $w={20} $h={22}><StackIcon flip /></PlainButton>
                    <PlainButton type="button" aria-label="재질 만들기" $w={24} $h={30}>
                      <Glyph viewBox="0 0 22 22" $w={22} aria-hidden="true">
                        <path d="M3 5 L12 1 L20 4 V14 L12 20 L3 16 Z" fill="#1c1c18" />
                        <path d="M4 5 L12 2 L18 4 L11 7 Z M12 10 L19 7 M12 14 L19 11 M4 8 L11 10" fill="#d8d4b8" stroke="#c8c4a8" />
                        <circle cx="6" cy="16" r="5.300" fill="#fff" stroke="#111" strokeWidth="1.3" /><path d="M3 16 H9 M6 13 V19" stroke="#111" strokeWidth="1.4" />
                      </Glyph>
                    </PlainButton>
                    <Material w={26} h={26} />
                  </SideIcons>
                </MaterialHead>
                <Rule />
                <TabRow role="tablist">
                  <Tab type="button" role="tab" $on>선택</Tab>
                  <Tab type="button" role="tab">편집</Tab>
                  <TabSpacer />
                  <PlainButton type="button" aria-label="스포이드" $w={30} $h={30}>
                    <Glyph viewBox="0 0 20 20" $w={20} aria-hidden="true">
                      <path d="M1 19 L3 15 L10 8 L12 10 L5 17 Z" fill="#e4c25c" stroke="#444" /><path d="M9 6 L14 11" stroke="#222" strokeWidth="2.600" /><path d="M12 8 L17 3" stroke="#444" strokeWidth="5" strokeLinecap="round" />
                    </Glyph>
                  </PlainButton>
                </TabRow>
                <Navigator id="colorset" value="색상" />
                <Rule />
                <ListRow>
                  <SwatchGrid>
                    {colors.map((c) => <Swatch key={c} type="button" aria-label={c} $color={c} />)}
                  </SwatchGrid>
                  <ScrollBar $w={19}><Chevron /><Thumb /><Filler /><Chevron down /></ScrollBar>
                </ListRow>
                <Splitter />
                <PickBar>선택</PickBar>
                <Navigator id="materialset" value="재질" line />
                <Rule />
                <ListRow $h={34}>
                  <SwatchGrid>
                    {[0, 1, 2].map((n) => (
                      <Swatch key={n} type="button" aria-label={`폴더 ${n + 1}`}>
                        <Glyph viewBox="0 0 36 36" aria-hidden="true">
                          <path d="M1 3 L10 2 L12 5 L20 4 V20 L5 34 Z" fill="#7fb0d6" stroke="#4a5a66" />
                          <path d="M6 9 L35 1 L32 28 L6 36 Z" fill="#b3956a" stroke="#4e4a42" />
                        </Glyph>
                      </Swatch>
                    ))}
                  </SwatchGrid>
                  <ScrollBar $w={19}><Chevron /><Thumb /></ScrollBar>
                </ListRow>
              </Panels>
              <ScrollBar $w={20}><Chevron /><Thumb /><Filler /><Chevron down /></ScrollBar>
            </TrayBody>
          </Tray>
          <CaptionBand />
        </Main>

        <StatusBar>
          <StatusIcons>
            <Glyph viewBox="0 0 18 18" $w={18} aria-hidden="true"><circle cx="9" cy="9" r="8" fill="none" stroke="#999" strokeWidth="1.4" /><path d="M9 4 C12 4 12 8 10.500 10 L9 14 L7.500 10 C6 8 6 4 9 4 Z" fill="#999" /></Glyph>
            <Glyph viewBox="0 0 18 18" $w={18} aria-hidden="true"><circle cx="9" cy="9" r="8" fill="none" stroke="#111" strokeWidth="1.8" /><circle cx="9" cy="5" r="1.600" /><path d="M6.500 8 H10.500 V13 H7.500 V9.500 H6.500 Z" /></Glyph>
            <Glyph viewBox="0 0 18 18" $w={18} aria-hidden="true"><circle cx="9" cy="9" r="8" fill="none" stroke="#999" strokeWidth="1.4" /><circle cx="9" cy="6.500" r="2.800" fill="#999" /><path d="M3.500 14 C4 9.500 14 9.500 14.500 14 C12 17 6 17 3.500 14 Z" fill="#999" /></Glyph>
          </StatusIcons>
          <StatusText>이동할 두 점을 선택하십시오. Ctrl = 복사 토글, Alt = 자동 접기 토글, Shift를 누른 채로 선택 = 추정 잠금</StatusText>
          <Measure>거리<input type="text" /></Measure>
        </StatusBar>

        <KeyStack aria-hidden="true">
          {keys.map((k, i) => <KeyCap key={i} $faded={i === 0}>{k}</KeyCap>)}
        </KeyStack>
      </Window>
    </Page>
  );
}
